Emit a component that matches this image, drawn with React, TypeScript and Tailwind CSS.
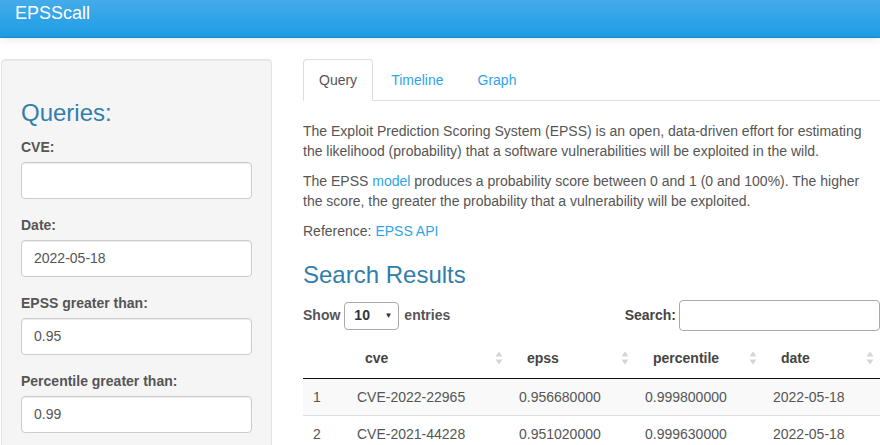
import type { ReactNode } from "react";

const rows = [
  {
    id: 1,
    cve: "CVE-2022-22965",
    epss: "0.956680000",
    percentile: "0.999800000",
    date: "2022-05-18",
  },
  {
    id: 2,
    cve: "CVE-2021-44228",
    epss: "0.951020000",
    percentile: "0.999630000",
    date: "2022-05-18",
  },
];

function SortIcon() {
  return (
    <svg
      width="8"
      height="14"
      viewBox="0 0 8 14"
      className="absolute right-[6px] top-1/2 -translate-y-1/2"
    >
      <path d="M4 0.5 L7.5 5.5 L0.5 5.5 Z" fill="#d6d6d6" />
      <path d="M4 13.5 L7.5 8.5 L0.5 8.5 Z" fill="#d6d6d6" />
    </svg>
  );
}

function Field({
  label,
  value,
}: {
  label: string;
  value: string;
}) {
  return (
    <div className="mb-[16px]">
      <label className="mb-[5px] block font-bold leading-[20px]">
        {label}
      </label>
      <div className="flex h-[37px] w-full items-center rounded-[4px] border border-[#ccc] bg-white px-[12px] shadow-[inset_0_1px_1px_rgba(0,0,0,0.075)]">
        {value}
      </div>
    </div>
  );
}

function Th({
  children,
  sortable = true,
}: {
  children?: ReactNode;
  sortable?: boolean;
}) {
  return (
    <th className="relative py-[10px] pl-[18px] text-left font-bold leading-[20px] text-[#444]">
      {children}
      {sortable && <SortIcon />}
    </th>
  );
}

export default function App() {
  return (
    <div className="h-[445px] w-[880px] overflow-hidden bg-white font-['Liberation_Sans',Arial,sans-serif] text-[14px] text-[#555]">

      {/* Navbar */}

      <div className="relative z-10 h-[38px] border-b border-[#178acc] bg-gradient-to-b from-[#45abe9] via-[#2fa4e7] to-[#1d9ce5] pl-[15px] pt-[3px] shadow-[0_1px_10px_rgba(0,0,0,0.1)]">
        <span className="text-[18px] leading-[20px] text-white">
          EPSScall
        </span>
      </div>

      <div className="flex pt-[21px]">

        {/* Sidebar */}

        <div className="ml-[1px] h-[420px] w-[271px] shrink-0 rounded-[4px] border border-[#e3e3e3] bg-[#f5f5f5] px-[19px] pt-[19px] shadow-[inset_0_1px_1px_rgba(0,0,0,0.05)]">
          <h3 className="mb-[11px] mt-[21px] text-[24px] leading-[26px] text-[#317eac]">
            Queries:
          </h3>
          <Field label="CVE:" value="" />
          <Field label="Date:" value="2022-05-18" />
          <Field label="EPSS greater than:" value="0.95" />
          <Field label="Percentile greater than:" value="0.99" />
        </div>

        {/* Main */}

        <div className="ml-[31px] w-[577px] shrink-0">

          <div className="flex border-b border-[#ddd]">
            <div className="-mb-px mr-[2px] rounded-t-[4px] border border-[#ddd] border-b-transparent bg-white px-[15px] py-[10px] leading-[20px] text-[#555]">
              Query
            </div>
            <div className="-mb-px mr-[2px] border border-transparent px-[15px] py-[10px] leading-[20px] text-[#2fa4e7]">
              Timeline
            </div>
            <div className="-mb-px border border-transparent px-[15px] py-[10px] leading-[20px] text-[#2fa4e7]">
              Graph
            </div>
          </div>

          <p className="mb-[10px] mt-[20px] leading-[20px]">
            The Exploit Prediction Scoring System (EPSS) is an open, data-driven effort for estimating the likelihood (probability) that a software vulnerabilities will be exploited in the wild.
          </p>
          <p className="mb-[10px] leading-[20px]">
            The EPSS <span className="text-[#2fa4e7]">model</span> produces a probability score between 0 and 1 (0 and 100%). The higher the score, the greater the probability that a vulnerability will be exploited.
          </p>
          <p className="leading-[20px]">
            Reference: <span className="text-[#2fa4e7]">EPSS API</span>
          </p>

          <h3 className="mb-[12px] mt-[21px] text-[24px] leading-[26px] text-[#317eac]">
            Search Results
          </h3>

          {/* Controls */}

          <div className="flex h-[31px] items-center justify-between">
            <div className="flex items-center font-bold">
              <span>Show</span>
              <div className="ml-[4px] flex h-[28px] w-[55px] items-center justify-between rounded-[4px] border border-[#aaa] bg-white pl-[9px] pr-[6px] text-[#333]">
                <span>10</span>
                <span className="text-[8px]">▼</span>
              </div>
              <span className="ml-[5px]">entries</span>
            </div>
            <div className="flex items-center font-bold">
              <span className="mr-[3px] text-[#444]">Search:</span>
              <div className="h-[31px] w-[201px] rounded-[4px] border border-[#aaa] bg-white" />
            </div>
          </div>

          {/* Table */}

          <table className="mt-[7px] w-full table-fixed border-collapse">
            <colgroup>
              <col className="w-[44px]" />
              <col className="w-[162px]" />
              <col className="w-[126px]" />
              <col className="w-[128px]" />
              <col />
            </colgroup>
            <thead>
              <tr className="border-b border-[#111]">
                <Th sortable={false} />
                <Th>cve</Th>
                <Th>epss</Th>
                <Th>percentile</Th>
                <Th>date</Th>
              </tr>
            </thead>
            <tbody>
              {rows.map((row, i) => (
                <tr
                  key={row.id}
                  className={
                    i % 2 === 0
                      ? "bg-[#f9f9f9]"
                      : "border-t border-[#ddd] bg-white"
                  }
                >
                  <td className="px-[10px] py-[8px] leading-[20px]">{row.id}</td>
                  <td className="px-[10px] py-[8px] leading-[20px]">{row.cve}</td>
                  <td className="px-[10px] py-[8px] leading-[20px]">{row.epss}</td>
                  <td className="px-[10px] py-[8px] leading-[20px]">{row.percentile}</td>
                  <td className="px-[10px] py-[8px] leading-[20px]">{row.date}</td>
                </tr>
              ))}
            </tbody>
          </table>

        </div>
      </div>
    </div>
  );
}
